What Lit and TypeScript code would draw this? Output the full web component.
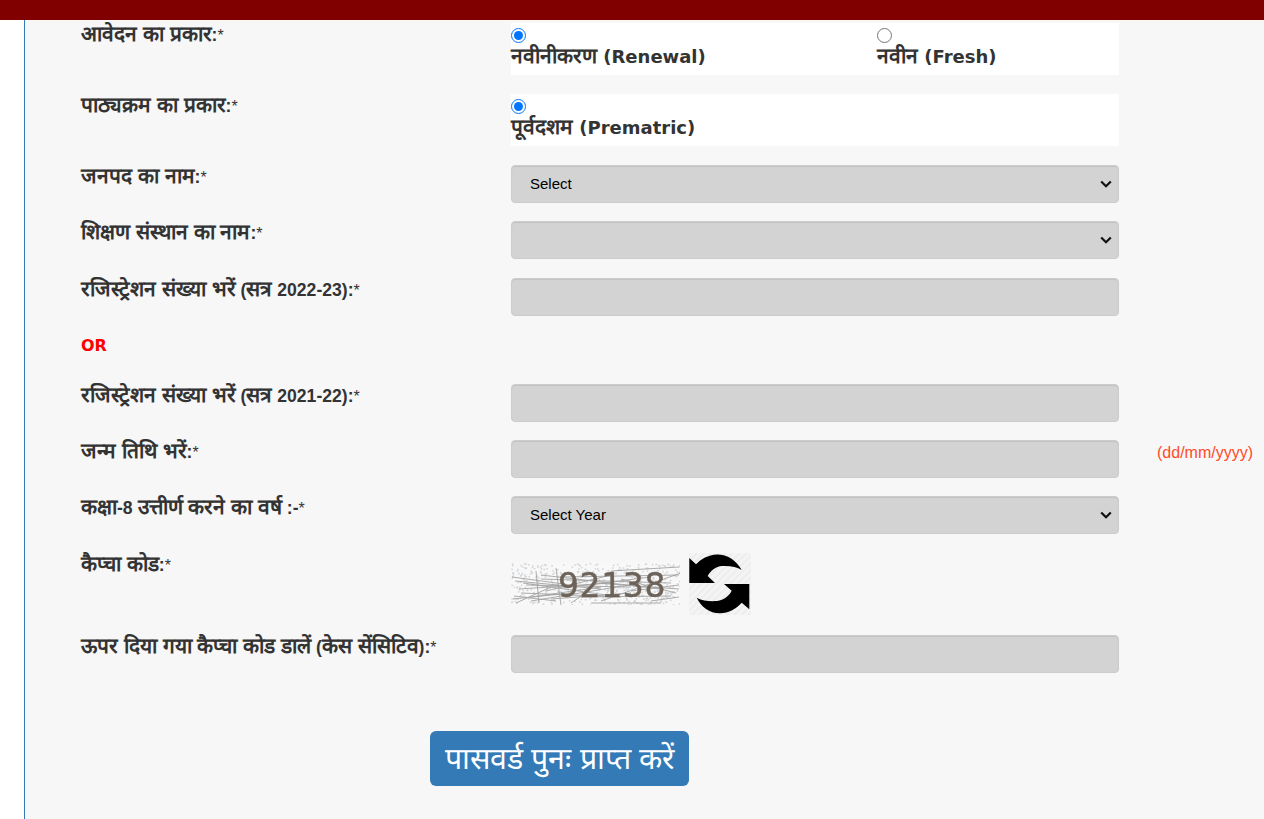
import { LitElement, html, css, svg } from "lit";
import { customElement } from "lit/decorators.js";

const noise: number[][] = [
  [1,14,60,22],[4,18,90,26],[10,30,110,34],[30,12,150,26],[2,36,60,30],[20,38,130,20],[45,5,50,42],[90,38,170,10],[110,16,165,30],
  [60,24,140,14],[15,22,120,24],[70,34,160,33],[5,40,40,24],[25,8,28,40],[80,40,150,40],[120,28,168,22],[35,28,100,12],[140,38,168,34],
  [8,26,100,20],[12,20,95,32],[30,16,160,20],[20,34,90,24],[40,36,120,30],[3,33,45,38],[50,14,168,12],[60,40,75,30],[85,20,168,26],[100,8,168,4],
];
let seed = 7;
const rnd = () => (seed = (seed * 16807) % 2147483647) / 2147483647;
const specks = Array.from({ length: 480 }, () => [rnd() * 169, rnd() * 42]);

const split = (t: string) =>
  t.split(/([\u0900-\u097F]+(?: [\u0900-\u097F]+)*)/).map((p) =>
    /[\u0900-\u097F]/.test(p) ? html`<span class="dv">${p}</span>` : p
  );

@customElement("app-root")
export class AppRoot extends LitElement {
  static styles = css`
    :host { display: block; height: 819px; overflow: hidden; background: #fff; font-family: "Liberation Sans", Arial, sans-serif; color: #333; }
    .top { height: 20px; background: #800000; }
    .panel { margin-left: 24px; height: 799px; border-left: 1px solid #337ab7; background: #f7f7f7; padding: 3px 0 0 56px; box-sizing: border-box; }
    .row { display: grid; grid-template-columns: 430px 608px 135px; }
    .lab { font-size: 17.6px; font-weight: 700; line-height: 20px; padding-top: 1px; white-space: nowrap; }
    .dv { font-size: 20.9px; }
    .star { font-weight: 400; font-size: 16px; }
    .h71 { height: 71px; } .h56 { height: 56.4px; } .h82 { height: 82px; }
    .radios { height: 52px; background: #fff; display: grid; grid-template-columns: 366px 1fr; }
    .radio { display: flex; flex-direction: column; align-items: flex-start; }
    .radio input { width: 15px; height: 15px; margin: 5px 0 0 0; }
    .rt { font-family: "DejaVu Sans", sans-serif; font-weight: 700; font-size: 18px; line-height: 23px; white-space: nowrap; margin-top: 2px; }
    .field { height: 38px; box-sizing: border-box; background: #d3d3d3; border-radius: 4px; border: 1px solid #ccc; box-shadow: inset 0 1px 1px rgba(0,0,0,.075); display: flex; align-items: center; justify-content: space-between; padding: 0 6px 1px 18px; font-size: 15px; color: #000; }
    .field svg { display: block; }
    .or { color: #f00; font-family: "DejaVu Sans", sans-serif; font-weight: 700; font-size: 16px; height: 47.4px; line-height: 20px; padding-top: 2px; }
    .hint { color: #ff4a2b; font-size: 16px; padding: 4px 0 0 38px; white-space: nowrap; line-height: 18px; }
    .cap { display: flex; align-items: center; height: 62px; gap: 9px; }
    .capimg { position: relative; width: 169px; height: 42px; background: #f8f8f8; filter: blur(.45px); }
    .capimg svg { position: absolute; inset: 0; }
    .capimg b { position: absolute; left: 47px; top: 5px; font: 400 33px/36px "DejaVu Sans", sans-serif; letter-spacing: .6px; color: #6d6258; -webkit-text-stroke: .4px #6d6258; }
    .btnrow { padding: 40px 0 0 349px; }
    .btn { display: inline-block; width: 259px; height: 55px; box-sizing: border-box; border-radius: 6px; background: #337ab7; color: #fff; font-size: 30.3px; line-height: 50px; text-align: center; white-space: nowrap; border: 0; padding: 0; font-family: inherit; }
  `;

  chev() {
    return html`<svg width="12" height="8" viewBox="0 0 12 8"><path d="M1.2 1.5 6 6.2l4.8-4.7" fill="none" stroke="#111" stroke-width="2.2"/></svg>`;
  }

  lab(t: string) {
    return html`<div class="lab">${split(t)}<span class="star">*</span></div>`;
  }

  render() {
    return html`
      <div class="top"></div>
      <div class="panel">
        <div class="row h71">${this.lab("आवेदन का प्रकार:")}
          <div class="radios">
            <label class="radio"><input type="radio" name="a" checked /><div class="rt">${split("नवीनीकरण (Renewal)")}</div></label>
            <label class="radio"><input type="radio" name="a" /><div class="rt">${split("नवीन (Fresh)")}</div></label>
          </div>
        </div>
        <div class="row h71">${this.lab("पाठ्यक्रम का प्रकार:")}
          <div class="radios"><label class="radio"><input type="radio" name="b" checked /><div class="rt">${split("पूर्वदशम (Prematric)")}</div></label></div>
        </div>
        <div class="row h56">${this.lab("जनपद का नाम:")}<div class="field"><span>Select</span>${this.chev()}</div></div>
        <div class="row h56">${this.lab("शिक्षण संस्थान का नाम:")}<div class="field"><span></span>${this.chev()}</div></div>
        <div class="row h56">${this.lab("रजिस्ट्रेशन संख्या भरें (सत्र 2022-23):")}<div class="field"></div></div>
        <div class="or">OR</div>
        <div class="row h56">${this.lab("रजिस्ट्रेशन संख्या भरें (सत्र 2021-22):")}<div class="field"></div></div>
        <div class="row h56">${this.lab("जन्म तिथि भरें:")}<div class="field"></div><div class="hint">(dd/mm/yyyy)</div></div>
        <div class="row h56">${this.lab("कक्षा-8 उत्तीर्ण करने का वर्ष :-")}<div class="field"><span>Select Year</span>${this.chev()}</div></div>
        <div class="row h82">${this.lab("कैप्चा कोड:")}
          <div class="cap">
            <div class="capimg">
              <svg width="169" height="42" viewBox="0 0 169 42">
                ${specks.map(([x, y]) => svg`<rect x=${x} y=${y} width="1.6" height="1.6" fill="#d4d7da"/>`)}
                ${noise.map(([a, b, c, d]) => svg`<line x1=${a} y1=${b} x2=${c} y2=${d} stroke="#a3a3a3" stroke-width=".9"/>`)}
              </svg>
              <b>92138</b>
            </div>
            <svg width="62" height="62" viewBox="0 0 62 62">
              <defs><pattern id="st" width="5" height="5" patternUnits="userSpaceOnUse" patternTransform="rotate(-45)"><rect width="5" height="5" fill="#f4f4f4"/><rect width="5" height="1.5" fill="#ebebeb"/></pattern></defs>
              <rect width="62" height="62" fill="url(#st)"/>
              <path fill="#000" d="M0.3 5V30H26L18.7 23C21 18 27 13.5 33 13C41 12.5 48 14 52.7 17C47 7 38 1.3 28 1.5C19 2 12 6 7 11.3Z"/>
              <path fill="#000" d="M60.3 31V56.3L52.7 49.7C47 56 40 60 31 60.3C21 60.5 12 54 7.7 44.7C14 48 21 48.5 28 48C35 47 40 43 42.7 37.7L35 31Z"/>
            </svg>
          </div>
        </div>
        <div class="row h56">${this.lab("ऊपर दिया गया कैप्चा कोड डालें (केस सेंसिटिव):")}<div class="field"></div></div>
        <div class="btnrow"><button class="btn">पासवर्ड पुनः प्राप्त करें</button></div>
      </div>
    `;
  }
}
